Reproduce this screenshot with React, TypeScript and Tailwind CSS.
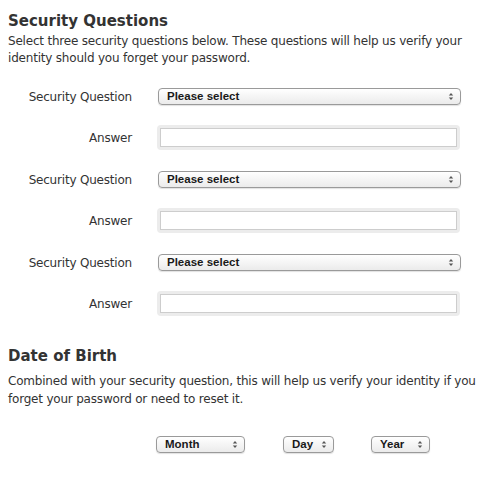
import React from 'react';

function SelectBox({ label, className }: { label: string; className: string }) {
  return (
    <div
      className={`flex h-[17px] items-center justify-between rounded-[4px] border border-[#9a9a9a] bg-gradient-to-b from-white to-[#ebebeb] pl-[8px] pr-[6px] font-['Liberation_Sans',sans-serif] text-[11.5px] font-bold leading-none text-[#1a1a1a] shadow-[0_1px_1px_rgba(0,0,0,0.12)] ${className}`}
    >
      <span>{label}</span>
      <svg width="6" height="9" viewBox="0 0 6 9" className="shrink-0">
        <path d="M0.8 3.6 L3 1 L5.2 3.6 Z" fill="#555" />
        <path d="M0.8 5.4 L3 8 L5.2 5.4 Z" fill="#555" />
      </svg>
    </div>
  );
}

function AnswerInput() {
  return (
    <div className="w-[303px] rounded-[4px] bg-[#ececec] p-[3px]">
      <div className="h-[19px] border border-[#cdcdcd] bg-white" />
    </div>
  );
}

export default function App() {
  const questions = [0, 1, 2];

  return (
    <div className="min-h-[479px] w-[482px] bg-white px-[8px] pt-[10px] font-['DejaVu_Sans',sans-serif] text-[#333]">
      {/* Security questions */}
      <h2 className="text-[15px] font-bold leading-[22px] text-[#333]">Security Questions</h2>
      <p className="mt-[1px] text-[12px] leading-[17px] tracking-[-0.2px]">
        Select three security questions below. These questions will help us verify your identity should you forget your
        password.
      </p>

      <div className="mt-[21px] flex flex-col">
        {questions.map((q) => (
          <div key={q} className="flex flex-col">
            <div className="flex h-[17px] items-center">
              <span className="w-[124px] text-right text-[12px] tracking-[-0.2px]">Security Question</span>
              <SelectBox label="Please select" className="ml-[26px] w-[303px]" />
            </div>
            <div className="mt-[20px] flex h-[25px] items-center">
              <span className="w-[124px] text-right text-[12px] tracking-[-0.2px]">Answer</span>
              <div className="ml-[25px]">
                <AnswerInput />
              </div>
            </div>
            <div className="h-[21px]" />
          </div>
        ))}
      </div>

      {/* Date of birth */}
      <h2 className="mt-[8px] text-[15px] font-bold leading-[22px] text-[#333]">Date of Birth</h2>
      <p className="-mr-[6px] mt-[5px] text-[12px] leading-[18px] tracking-[-0.2px]">
        Combined with your security question, this will help us verify your identity if you forget your password or need
        to reset it.
      </p>

      <div className="mt-[28px] flex items-center">
        <SelectBox label="Month" className="ml-[148px] w-[89px]" />
        <SelectBox label="Day" className="ml-[38px] w-[51px]" />
        <SelectBox label="Year" className="ml-[37px] w-[59px]" />
      </div>
    </div>
  );
}
